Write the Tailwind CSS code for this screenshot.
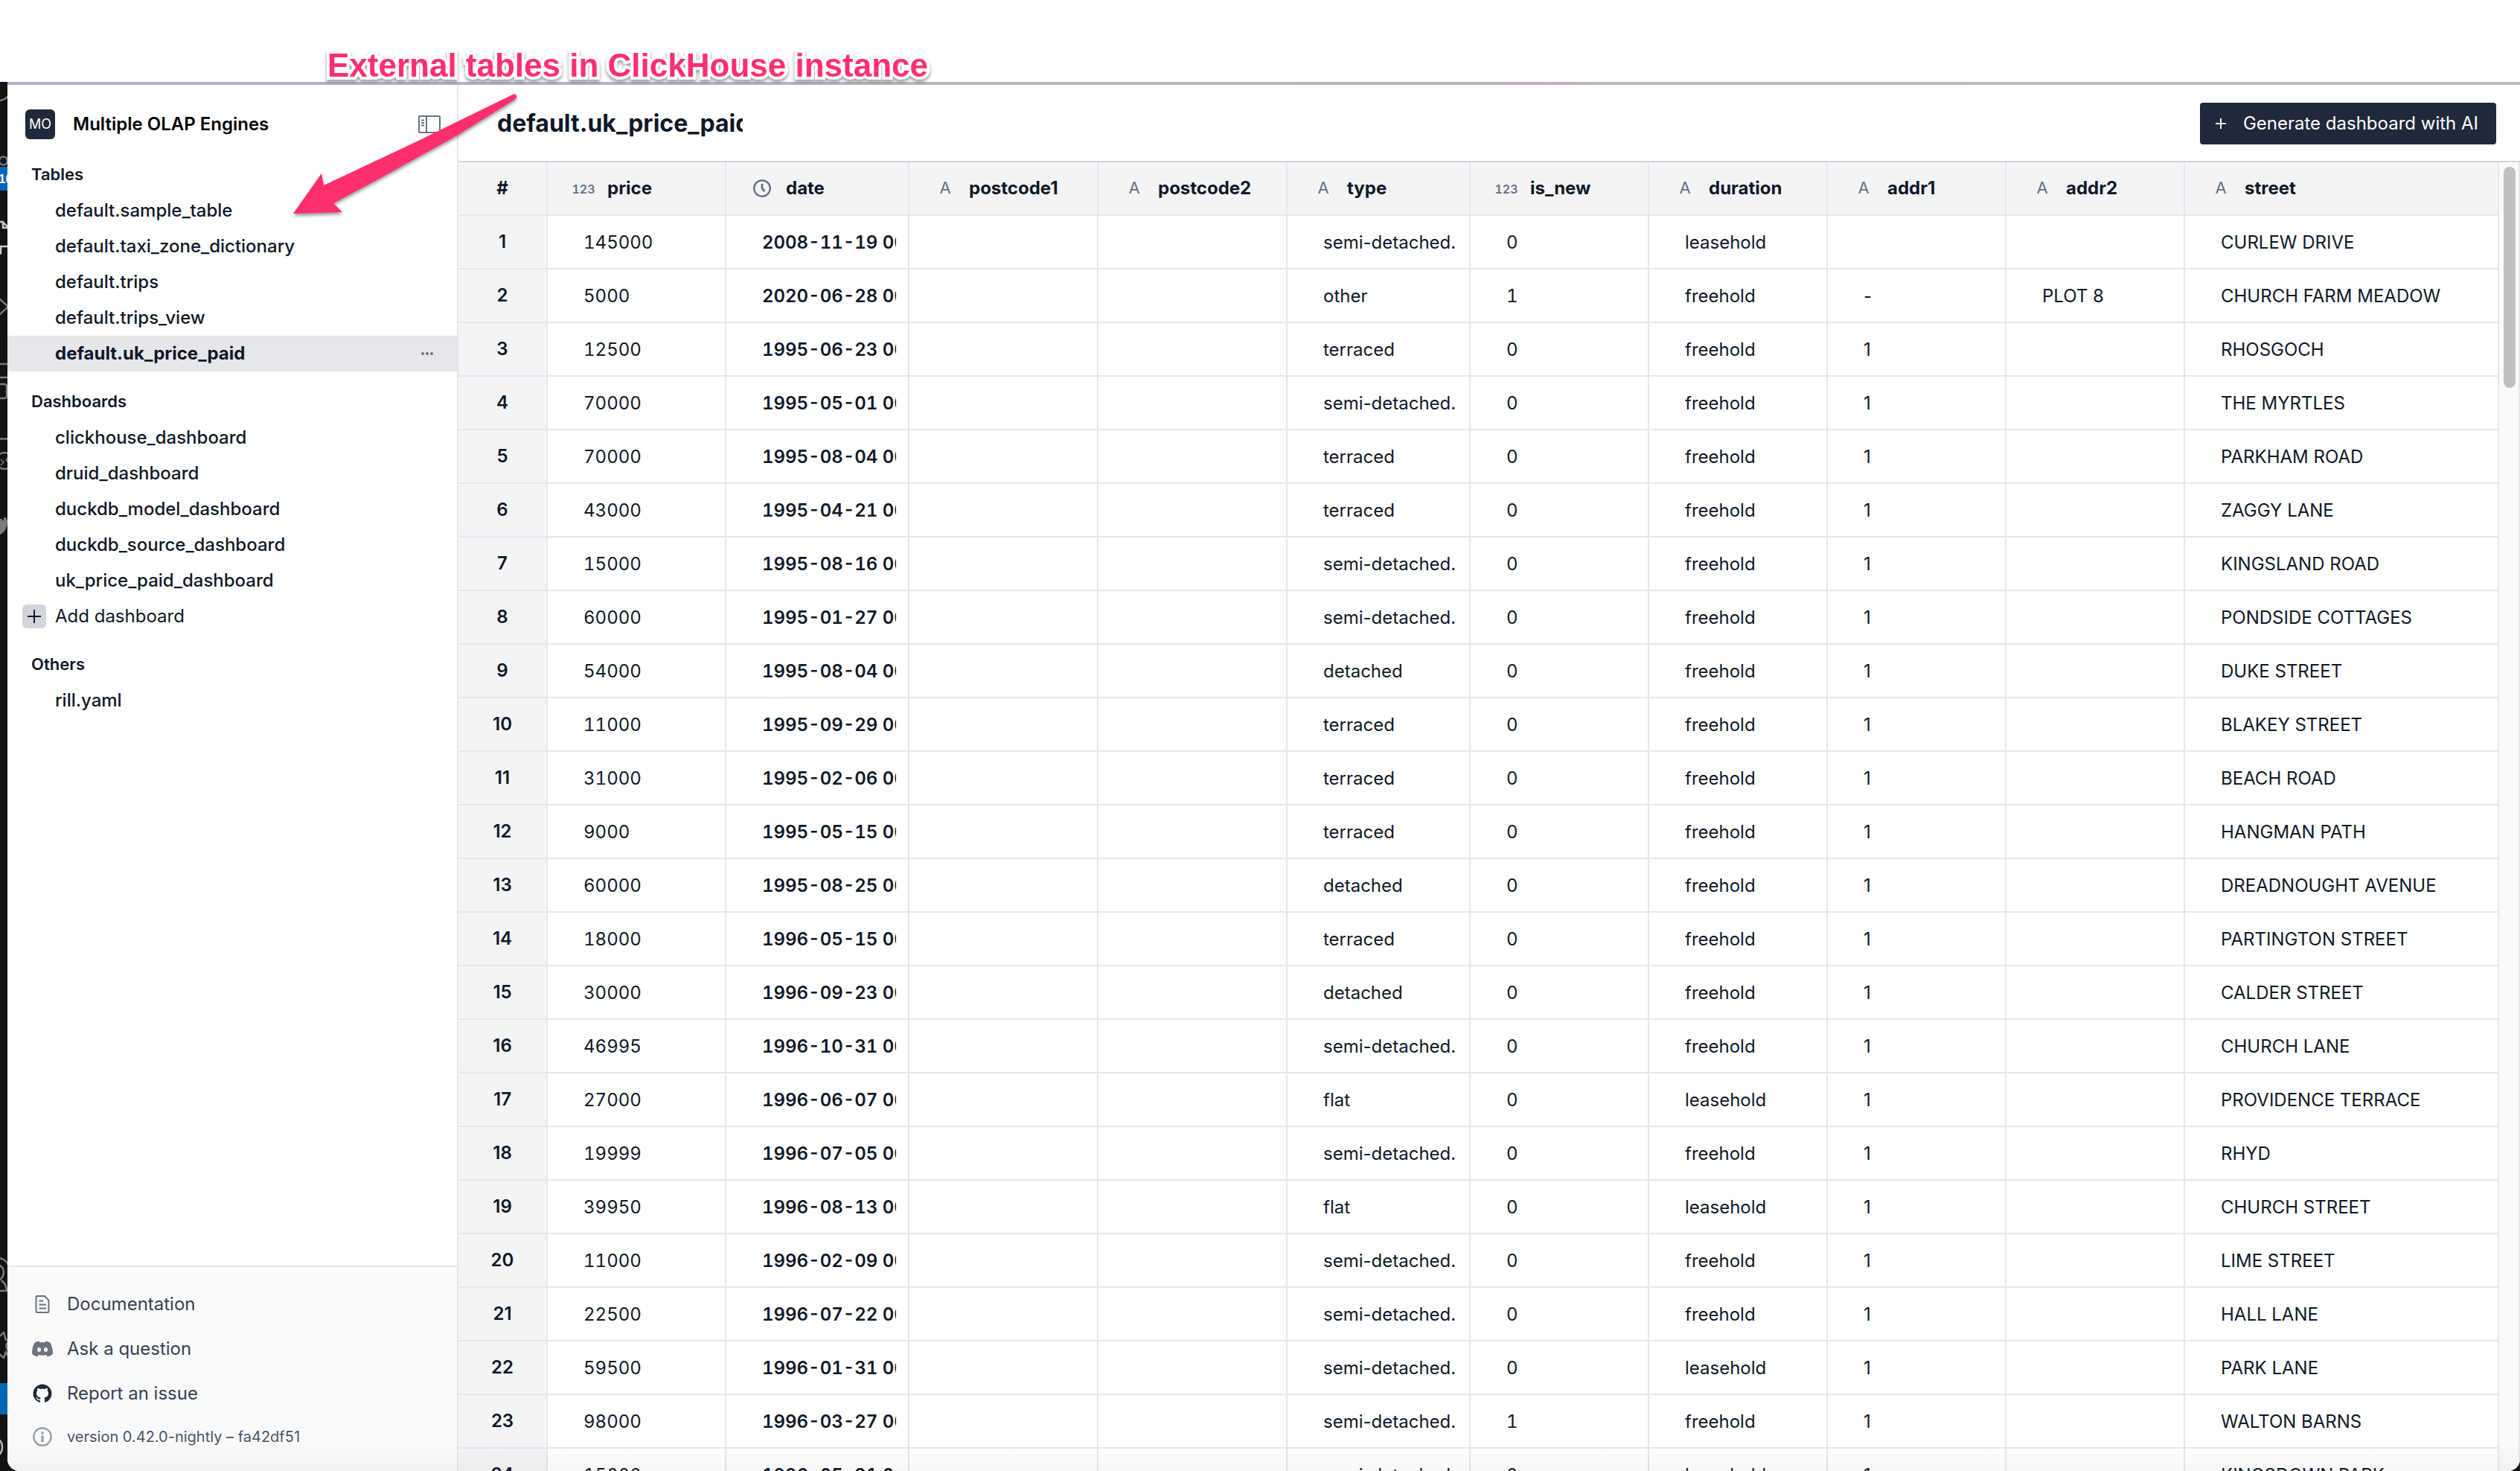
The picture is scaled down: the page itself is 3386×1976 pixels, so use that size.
<!DOCTYPE html>
<html lang="en">
<head>
<meta charset="utf-8">
<title>Multiple OLAP Engines</title>
<script src="https://cdn.jsdelivr.net/npm/@tailwindcss/browser@4"></script>
</head>
<body class="relative flex h-screen flex-col overflow-hidden bg-white font-['Inter',sans-serif] text-2xl text-gray-900">
  <div class="h-[110px] shrink-0"></div>

  <div class="flex min-h-0 flex-1 bg-[#131313]">
    <!-- Edge of the editor's activity bar -->
    <svg class="h-full w-[10px] shrink-0" viewBox="0 0 10 1866" preserveAspectRatio="xMinYMin slice" fill="none" stroke="#7a7a7a" stroke-width="2.5" aria-hidden="true">
      <path d="M-2 25Q6 25 11 19"/>
      <circle cx="4.5" cy="106" r="5.5"/>
      <path d="M-2 114H10V146H-2Z" fill="#0466b8" stroke="none"/>
      <text x="-2" y="136" fill="#fff" stroke="none" font-size="17" font-weight="700" font-family="Liberation Sans, sans-serif">10</text>
      <path d="M-2 188H4V196H10M3 188L11 195" stroke="#c9c9c9"/>
      <path d="M11 221H1V230L-2 232" stroke="#c9c9c9"/>
      <path d="M-2 290L11 302L-2 314"/>
      <path d="M-2 379H11M-2 397H11"/>
      <rect x="-8" y="406" width="17" height="19" rx="3"/>
      <path d="M-2 479.500H11"/>
      <circle cx="6" cy="509" r="11"/>
      <path d="M1 507L5 511L1 515M11 504L8 508L11 511" stroke-width="1.500"/>
      <path d="M-1 592V587H3V589H5V585H8L10 590Q10 604 -1 609Z" fill="#7a7a7a" stroke="none"/>
      <path d="M-2 1580Q7 1581 11 1589M-2 1589Q5 1592 5 1600Q4 1607 -2 1610M2 1610Q9 1616 9 1624Q6 1624 -2 1624"/>
      <path d="M-2 1686L5 1680L8 1690H11M-2 1708L5 1714L8 1706L11 1712M11 1692Q6 1698 11 1704"/>
      <path d="M-2 1748H10V1790H-2Z" fill="#0466b8" stroke="none"/>
      <path d="M-3 1823Q3 1826 3 1834Q3 1842 -3 1845" stroke="#b5b5b5"/>
    </svg>

    <div class="relative flex min-w-0 flex-1 flex-col overflow-hidden rounded-b-2xl bg-white">
      <div class="h-1 shrink-0 bg-linear-to-r from-[#b1b0cd] to-[#c9b9ba]"></div>
      <div class="flex min-h-0 flex-1">

        <nav class="flex w-[606px] shrink-0 flex-col border-r-2 border-gray-200" aria-label="Project">
          <div class="flex h-[97px] shrink-0 items-center pt-2 pr-[22px] pl-6">
            <span class="flex size-10 items-center justify-center rounded-md bg-gray-800 text-lg text-white">MO</span>
            <h1 class="ml-6 flex-1 font-semibold text-black">Multiple OLAP Engines</h1>
            <button type="button" aria-label="Close sidebar">
              <svg class="h-6 w-[30px]" viewBox="0 0 30 24" fill="none" stroke="#6b7280" stroke-width="2"><rect x="1" y="1" width="28" height="22" rx="1"/><path d="M11 1V23M4 6.500H8M4 10H8M4 13.500H8"/></svg>
            </button>
          </div>

          <h2 class="flex h-12 items-center pl-8 text-[22px] font-semibold">Tables</h2>
          <ul class="font-medium">
            <li><a href="#" class="flex h-12 items-center pl-16">default.sample_table</a></li>
            <li><a href="#" class="flex h-12 items-center pl-16">default.taxi_zone_dictionary</a></li>
            <li><a href="#" class="flex h-12 items-center pl-16">default.trips</a></li>
            <li><a href="#" class="flex h-12 items-center pl-16">default.trips_view</a></li>
            <li class="flex h-12 items-center bg-gray-200 pr-8 pl-16">
              <a href="#" class="flex-1 font-bold">default.uk_price_paid</a>
              <button type="button" aria-label="More actions"><svg class="h-1.5 w-4" viewBox="0 0 16 6" fill="#6b7280"><circle cx="2" cy="3" r="2"/><circle cx="8" cy="3" r="2"/><circle cx="14" cy="3" r="2"/></svg></button>
            </li>
          </ul>

          <h2 class="mt-[17px] flex h-12 items-center pl-8 text-[22px] font-semibold">Dashboards</h2>
          <ul class="font-medium">
            <li><a href="#" class="flex h-12 items-center pl-16">clickhouse_dashboard</a></li>
            <li><a href="#" class="flex h-12 items-center pl-16">druid_dashboard</a></li>
            <li><a href="#" class="flex h-12 items-center pl-16">duckdb_model_dashboard</a></li>
            <li><a href="#" class="flex h-12 items-center pl-16">duckdb_source_dashboard</a></li>
            <li><a href="#" class="flex h-12 items-center pl-16">uk_price_paid_dashboard</a></li>
          </ul>
          <button type="button" class="flex h-12 items-center gap-3 pl-5">
            <span class="flex size-8 items-center justify-center rounded-md bg-gray-300"><svg class="size-5" viewBox="0 0 20 20" stroke="#111827" stroke-width="2"><path d="M10 1V19M1 10H19"/></svg></span>
            Add dashboard
          </button>

          <h2 class="mt-[17px] flex h-12 items-center pl-8 text-[22px] font-semibold">Others</h2>
          <ul class="font-medium">
            <li><a href="#" class="flex h-12 items-center pl-16">rill.yaml</a></li>
          </ul>

          <footer class="mt-auto h-[276px] shrink-0 border-t-2 border-gray-200 bg-gray-50 pt-5 pl-[34px] text-gray-700">
            <a href="#" class="flex h-[60px] items-center gap-5">
              <svg class="size-[26px]" viewBox="0 0 26 26" fill="none" stroke="#6b7280" stroke-width="2"><path d="M5 2H16L21.500 8V22.500Q21.500 24 20 24H6Q4.500 24 4.500 22.500V3Q4.500 2 6 2Z"/><path d="M8.500 8.500H14M8.500 13.500H18M8.500 18.500H18"/></svg>
              Documentation
            </a>
            <a href="#" class="flex h-[60px] items-center gap-5">
              <svg class="h-[22px] w-7 -mx-px" viewBox="0 0 28 22" fill="#6b7280" fill-rule="evenodd"><path d="M9.500 0.500L10.500 2.200Q14 1.600 17.500 2.200L18.500 0.500Q21.500 1 24 2.300Q28.500 9 27.800 18Q25 20.500 20.800 21.500L19.300 19Q14 20.500 8.700 19L7.200 21.500Q3 20.500 0.200 18Q-0.500 9 4 2.300Q6.500 1 9.500 0.500ZM9.500 9A2.500 2.900 0 1 0 9.500 14.800A2.500 2.900 0 1 0 9.500 9ZM18.500 9A2.500 2.900 0 1 0 18.500 14.800A2.500 2.900 0 1 0 18.500 9Z"/></svg>
              Ask a question
            </a>
            <a href="#" class="flex h-[60px] items-center gap-5">
              <svg class="size-[26px]" viewBox="0 0 24 24" fill="#1f2937"><path d="M12 .5C5.650.5.5 5.650.5 12c0 5.100 3.290 9.400 7.860 10.940.580.100.790-.250.790-.560v-2.150c-3.200.7-3.880-1.360-3.880-1.360-.520-1.330-1.280-1.690-1.280-1.690-1.040-.710.080-.7.080-.7 1.160.080 1.770 1.190 1.770 1.190 1.030 1.760 2.700 1.250 3.350.960.100-.750.400-1.250.730-1.540-2.550-.290-5.240-1.280-5.240-5.680 0-1.260.450-2.280 1.190-3.090-.120-.290-.520-1.460.110-3.050 0 0 .970-.310 3.160 1.180a11 11 0 0 1 5.760 0c2.190-1.490 3.150-1.180 3.150-1.180.630 1.590.230 2.760.110 3.050.740.810 1.190 1.830 1.190 3.090 0 4.420-2.700 5.390-5.260 5.670.410.360.780 1.060.780 2.130v3.170c0 .310.210.670.800.560A11.500 11.500 0 0 0 23.500 12C23.500 5.650 18.350.5 12 .5Z"/></svg>
              Report an issue
            </a>
            <div class="flex h-14 items-center gap-5 text-xl text-gray-600">
              <svg class="size-[26px]" viewBox="0 0 26 26" fill="none" stroke="#9ca3af" stroke-width="2.500"><circle cx="13" cy="13" r="11.700"/><path d="M13 11.500V20M13 6.500V9.500" stroke-width="3.500"/></svg>
              version 0.42.0-nightly – fa42df51
            </div>
          </footer>
        </nav>

        <main class="flex min-w-0 flex-1 flex-col">
          <header class="flex h-[104px] shrink-0 items-center justify-between border-b-2 border-gray-300 pt-0.5 pr-8 pl-[52px]">
            <input type="text" aria-label="Table name" value="default.uk_price_paid" class="w-[330px] bg-transparent text-[32px] font-bold outline-none">
            <button type="button" class="flex h-14 items-center gap-[22px] rounded bg-gray-800 pr-6 pl-5 text-white">
              <svg class="size-4" viewBox="0 0 16 16" stroke="currentColor" stroke-width="2"><path d="M8 1V15M1 8H15"/></svg>
              Generate dashboard with AI
            </button>
          </header>
          <div class="flex min-h-0 flex-1">
            <div class="min-w-0 flex-1 overflow-hidden">
              <table class="w-full table-fixed border-separate border-spacing-0">
                <colgroup>
                  <col class="w-[120px]"><col class="w-[240px]"><col class="w-[246px]"><col class="w-[254px]"><col class="w-[254px]"><col class="w-[246px]"><col class="w-[240px]"><col class="w-[240px]"><col class="w-[240px]"><col class="w-[240px]"><col>
                </colgroup>
                <thead><tr id="head"></tr></thead>
                <tbody id="rows"></tbody>
              </table>
            </div>
            <div class="w-7 shrink-0 border-r-2 border-gray-200 bg-[#fafafa] pt-1.5 pl-1.5">
              <div class="h-[297px] w-4 rounded-full bg-[#c1c1c1]"></div>
            </div>
          </div>
        </main>
      </div>
      <div class="pointer-events-none absolute inset-x-0 bottom-0 h-10 bg-linear-to-b from-transparent to-black/3"></div>
    </div>
  </div>

  <!-- Annotation over the app -->
  <p class="absolute top-[63px] left-[440px] text-[44px] leading-[50px] font-bold whitespace-nowrap text-[#ff2f6e] font-['Liberation_Sans',sans-serif] [-webkit-text-stroke:8px_white] [paint-order:stroke_fill] drop-shadow-[0_3px_2px_rgba(0,0,0,0.4)]">External tables in ClickHouse instance</p>
  <svg class="absolute top-[120px] left-[384px] h-[176px] w-[320px] drop-shadow-[0_3px_2px_rgba(0,0,0,0.4)]" viewBox="0 0 320 176" fill="#ff2f6e" aria-hidden="true">
    <path d="M10 167L48 113L51 129L174 71L305 7Q309 5 310 9Q311 12 307 14L230 62L129 118L64 153L76 165Z"/>
  </svg>

  <script>
    const icons = {
      num: '<span class="pt-0.5 text-base font-semibold tabular-nums">123</span>',
      str: '<span class="font-[\'DejaVu_Sans_Mono\',monospace] text-[22px] font-normal">A</span>',
      time: '<svg class="size-6" viewBox="0 0 24 24" fill="none" stroke="currentColor" stroke-width="2.400"><circle cx="12" cy="12" r="10.800"/><path d="M12 6V12L15.500 16" stroke-width="2.800"/></svg>'
    };
    const columns = [['num', 'price'], ['time', 'date'], ['str', 'postcode1'], ['str', 'postcode2'], ['str', 'type'], ['num', 'is_new'], ['str', 'duration'], ['str', 'addr1'], ['str', 'addr2'], ['str', 'street']];
    const data = `145000|2008-11-19|semi-detached|0|leasehold|||CURLEW DRIVE
5000|2020-06-28|other|1|freehold|-|PLOT 8|CHURCH FARM MEADOW
12500|1995-06-23|terraced|0|freehold|1||RHOSGOCH
70000|1995-05-01|semi-detached|0|freehold|1||THE MYRTLES
70000|1995-08-04|terraced|0|freehold|1||PARKHAM ROAD
43000|1995-04-21|terraced|0|freehold|1||ZAGGY LANE
15000|1995-08-16|semi-detached|0|freehold|1||KINGSLAND ROAD
60000|1995-01-27|semi-detached|0|freehold|1||PONDSIDE COTTAGES
54000|1995-08-04|detached|0|freehold|1||DUKE STREET
11000|1995-09-29|terraced|0|freehold|1||BLAKEY STREET
31000|1995-02-06|terraced|0|freehold|1||BEACH ROAD
9000|1995-05-15|terraced|0|freehold|1||HANGMAN PATH
60000|1995-08-25|detached|0|freehold|1||DREADNOUGHT AVENUE
18000|1996-05-15|terraced|0|freehold|1||PARTINGTON STREET
30000|1996-09-23|detached|0|freehold|1||CALDER STREET
46995|1996-10-31|semi-detached|0|freehold|1||CHURCH LANE
27000|1996-06-07|flat|0|leasehold|1||PROVIDENCE TERRACE
19999|1996-07-05|semi-detached|0|freehold|1||RHYD
39950|1996-08-13|flat|0|leasehold|1||CHURCH STREET
11000|1996-02-09|semi-detached|0|freehold|1||LIME STREET
22500|1996-07-22|semi-detached|0|freehold|1||HALL LANE
59500|1996-01-31|semi-detached|0|leasehold|1||PARK LANE
98000|1996-03-27|semi-detached|1|freehold|1||WALTON BARNS
15000|1996-05-31|semi-detached|0|leasehold|1||KINGSDOWN PARK`.split('\n').map(line => line.split('|'));

    document.getElementById('head').innerHTML =
      '<th scope="col" class="h-[72px] border-r-2 border-b-2 border-gray-200 bg-gray-100 p-0 font-bold">#</th>' +
      columns.map(([kind, name]) => `<th scope="col" class="h-[72px] border-r-2 border-b-2 border-gray-200 bg-gray-100 p-0 pl-8 font-bold"><div class="flex items-center gap-4"><span class="flex w-8 justify-center text-gray-500">${icons[kind]}</span>${name}</div></th>`).join('');

    const cell = (text, style) => `<td class="h-[72px] border-r-2 border-b-2 border-gray-200 p-0 pt-0.5 pr-4 pl-12"><div class="overflow-hidden whitespace-nowrap ${style}">${text}</div></td>`;
    document.getElementById('rows').innerHTML = data.map(([price, date, type, isNew, duration, addr1, addr2, street], i) =>
      `<tr><th scope="row" class="h-[72px] border-r-2 border-b-2 border-gray-200 bg-gray-100 p-0 font-semibold">${i + 1}</th>` +
      cell(price, 'tabular-nums') + cell(date + ' 00:00:00', 'font-semibold tabular-nums') + cell('', '') + cell('', '') +
      cell(type === 'semi-detached' ? 'semi-detached...' : type, '') + cell(isNew, 'tabular-nums') + cell(duration, '') + cell(addr1, '') + cell(addr2, '') + cell(street, '') + '</tr>').join('');
  </script>
</body>
</html>
